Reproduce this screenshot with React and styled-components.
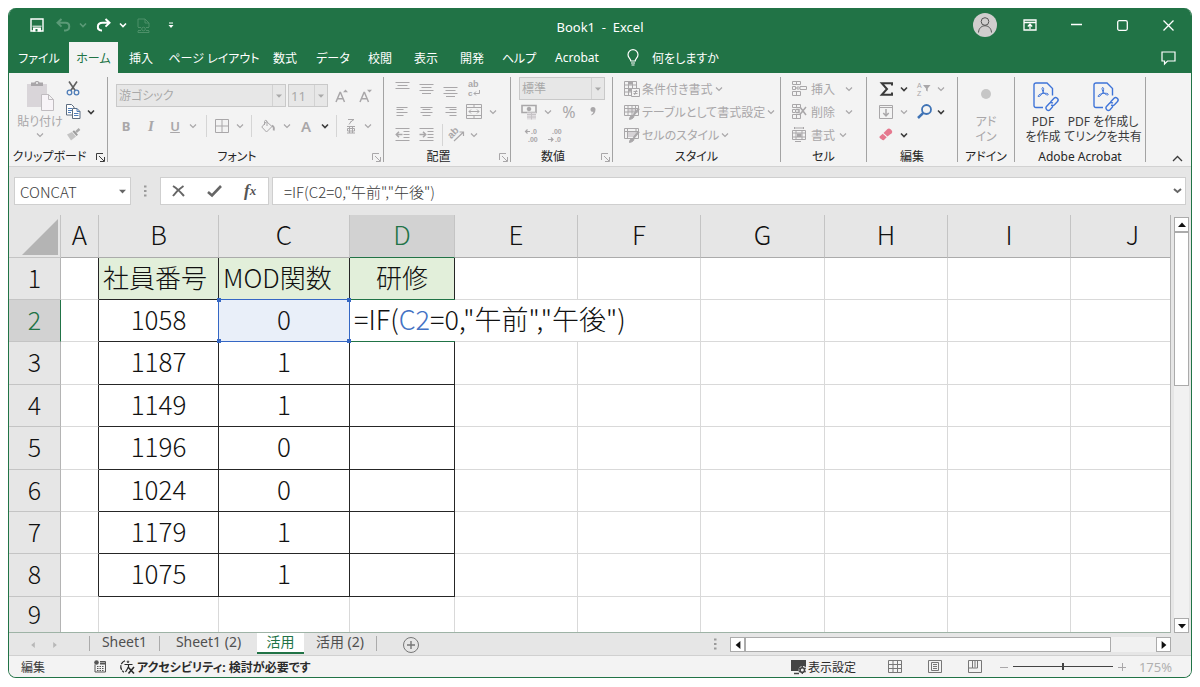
import React from "react";
import styled, { createGlobalStyle, css } from "styled-components";

const GREEN = "#217346";
const DIM = "#a9a7a9";
const INK = "#3b3b3b";
const UI = `"Noto Sans", "Noto Sans CJK JP", sans-serif`;
const SHEET = `"Noto Sans CJK JP", sans-serif`;

const GlobalStyle = createGlobalStyle`
  *, *::before, *::after { box-sizing: border-box; }
  body { margin: 0; background: #fff; font-family: ${UI}; font-size: 12px; color: ${INK}; }
  button, input, select {
    font: inherit; color: inherit; margin: 0; padding: 0;
    border: 0; border-radius: 0; background: none; outline: none;
  }
  svg { display: block; flex: none; overflow: visible; }
`;

/* ---------- window frame ---------- */

const Page = styled.div`
  height: 100vh;
  min-height: 400px;
  padding: 8px 8px 9px;
  display: flex;
`;

const Window = styled.div`
  flex: 1;
  min-width: 0;
  display: flex;
  flex-direction: column;
  border: 1px solid ${GREEN};
  border-top: 0;
  border-radius: 8px;
  overflow: hidden;
  background: #e6e6e6;
  font-feature-settings: "palt";
`;

const Header = styled.header`
  flex: none;
  background: ${GREEN};
  color: #fff;
`;

const TitleBar = styled.div`
  display: grid;
  grid-template-columns: 1fr auto 1fr;
  align-items: center;
  height: 34px;
`;

const QuickAccess = styled.div`
  display: flex;
  align-items: center;
  padding-left: 18px;
`;

const Title = styled.h1`
  margin: 0;
  padding-top: 3px;
  font-size: 13px;
  font-weight: 400;
  white-space: pre;
`;

const WindowButtons = styled.div`
  display: flex;
  align-items: center;
  justify-content: flex-end;
`;

const Avatar = styled.button`
  width: 24px;
  height: 24px;
  margin-right: 10px;
  border-radius: 50%;
  background: #d0cece;
  color: #555;
  display: flex;
  align-items: center;
  justify-content: center;
`;

const IconButton = styled.button`
  flex: none;
  width: ${(p) => p.$w || 24}px;
  height: ${(p) => p.$h || 22}px;
  display: flex;
  align-items: center;
  justify-content: center;
  color: ${(p) => p.$color || DIM};
`;

const TabRow = styled.nav`
  display: flex;
  height: 31px;
`;

const Tab = styled.button`
  flex: none;
  width: ${(p) => p.$w}px;
  font-size: 12px;
  white-space: nowrap;
  ${(p) => p.$active && css`background: #f3f3f3; color: ${GREEN};`}
`;

const TellMe = styled.button`
  display: flex;
  align-items: center;
  gap: 13px;
  padding-left: 19px;
  white-space: nowrap;
`;

const Spacer = styled.div`
  flex: 1;
`;

/* ---------- ribbon ---------- */

const Ribbon = styled.div`
  flex: none;
  display: flex;
  height: 94px;
  padding: 4px 0;
  background: #f3f3f3;
  border-bottom: 1px solid #d2d2d2;
`;

const Group = styled.section`
  position: relative;
  flex: none;
  width: ${(p) => p.$w}px;
  display: flex;
  flex-direction: column;
  border-right: 1px solid #a3a3a3;
`;

const GroupBody = styled.div`
  flex: 1;
  display: flex;
  flex-direction: ${(p) => (p.$column ? "column" : "row")};
  padding: ${(p) => p.$pad || "0"};
`;

const GroupLabel = styled.div`
  display: flex;
  align-items: flex-end;
  justify-content: center;
  height: 16px;
  padding-right: ${(p) => (p.$launcher ? 17 : 0)}px;
  font-size: 12px;
  line-height: 10px;
  color: #262626;
  white-space: nowrap;
`;

const Launcher = styled.button`
  position: absolute;
  right: 2px;
  bottom: 0;
  width: 9px;
  height: 9px;
  color: ${(p) => p.$color || DIM};
`;

const Row = styled.div`
  display: flex;
  align-items: center;
  height: ${(p) => p.$h || 23}px;
`;

const Column = styled.div`
  display: flex;
  flex-direction: column;
`;

const Rule = styled.span`
  flex: none;
  width: 1px;
  height: 22px;
  margin: 0 4px;
  background: #d5d5d5;
`;

const BigButton = styled.button`
  width: ${(p) => p.$w}px;
  display: flex;
  flex-direction: column;
  align-items: center;
  font-size: 12px;
  line-height: 15px;
  color: ${(p) => p.$color || DIM};
  white-space: nowrap;
`;

const BigLabel = styled.span`
  padding: 3px 0;
`;

const TextButton = styled.button`
  display: flex;
  align-items: center;
  gap: ${(p) => p.$gap || 2}px;
  height: 23px;
  color: ${DIM};
  white-space: nowrap;
`;

const Glyph = styled.span`
  font-size: ${(p) => p.$size || 14}px;
  font-weight: ${(p) => p.$weight || 400};
  font-style: ${(p) => (p.$italic ? "italic" : "normal")};
  font-family: ${(p) => (p.$serif ? '"Liberation Serif", serif' : UI)};
  text-decoration: ${(p) => (p.$underline ? "underline" : "none")};
  line-height: 16px;
`;

const SelectBox = styled.span`
  display: flex;
  position: relative;
  width: ${(p) => p.$w}px;
  height: 23px;
  margin-right: 2px;
  border: 1px solid #c9c9c9;
  background: #e7e7e7;
  color: #a9a9a9;
`;

const Select = styled.select`
  appearance: none;
  flex: 1;
  min-width: 0;
  padding: 0 2px;
  font-size: ${(p) => p.$size || 12}px;
  opacity: 1;
`;

const SelectArrow = styled.span`
  width: 13px;
  border-left: 1px solid #d2d2d2;
  display: flex;
  align-items: center;
  justify-content: center;
  pointer-events: none;
`;

const RibbonEnd = styled.div`
  flex: 1;
  display: flex;
  align-items: flex-end;
  justify-content: flex-end;
  padding-right: 2px;
`;

/* ---------- formula bar ---------- */

const FormulaRow = styled.div`
  flex: none;
  display: flex;
  height: 48px;
  padding: 10px 5px;
`;

const FieldBox = styled.div`
  display: flex;
  align-items: center;
  flex: ${(p) => (p.$w ? "none" : "1")};
  width: ${(p) => (p.$w ? p.$w + "px" : "auto")};
  min-width: 0;
  background: #fff;
  border: 1px solid #cfcfcf;
`;

const Field = styled.input`
  flex: 1;
  min-width: 0;
  height: 24px;
  padding-left: ${(p) => p.$pad}px;
  font-family: ${SHEET};
  font-size: 15px;
  font-weight: 300;
  font-feature-settings: normal;
  color: #3a3a3a;
`;

const DotsHandle = styled.span`
  width: 29px;
  display: flex;
  align-items: center;
  justify-content: center;
  color: #9a9a9a;
`;

const FxBox = styled(FieldBox)`
  justify-content: space-around;
  margin-right: 3px;
`;

/* ---------- worksheet ---------- */

const SheetArea = styled.div`
  flex: 1;
  min-height: 0;
  display: flex;
`;

const GridClip = styled.div`
  flex: 1;
  min-width: 0;
  overflow: hidden;
  background: #fff;
  border-right: 1px solid #b4b4b4;
  border-bottom: 1px solid #9eb3a6;
`;

const Grid = styled.table`
  table-layout: fixed;
  width: 1186px;
  border-collapse: separate;
  border-spacing: 0;
  font-family: ${SHEET};
  font-size: 26px;
  font-weight: 300;
  font-feature-settings: normal;
  line-height: 30px;
  color: #111;
`;

const Col = styled.col`
  width: ${(p) => p.$w}px;
`;

const Line = styled.tr`
  height: ${(p) => p.$h}px;
`;

const HeadCell = styled.th`
  position: relative;
  padding: 0 0 4px;
  font-weight: 300;
  font-size: ${(p) => (p.$row ? 25 : 26)}px;
  background: ${(p) => (p.$on ? "#d2d2d2" : "#e6e6e6")};
  color: ${(p) => (p.$on ? GREEN : "#111")};
  border-right: 1px solid ${(p) => (p.$row ? (p.$on ? GREEN : "#b4b4b4") : "#c4c4c4")};
  border-bottom: 1px solid ${(p) => (p.$row ? "#c4c4c4" : p.$on ? GREEN : "#ababab")};
`;

const Corner = styled.td`
  padding: 0;
  background: #e6e6e6;
  border-right: 1px solid #c4c4c4;
  border-bottom: 1px solid #c4c4c4;
`;

const SelectAll = styled.button`
  display: flex;
  width: 100%;
  height: 42px;
  align-items: flex-end;
  justify-content: flex-end;
  padding: 2px;
`;

const Cell = styled.td`
  position: relative;
  padding: 0 4px 4px;
  text-align: ${(p) => p.$align || "center"};
  white-space: nowrap;
  background: ${(p) => p.$fill || "#fff"};
  border-right: 1px solid ${(p) => (p.$edgeRight ? "#262626" : "#d9d9d9")};
  border-bottom: 1px solid ${(p) => (p.$edgeBottom ? "#262626" : "#d9d9d9")};
`;

const Outline = styled.span`
  position: absolute;
  inset: -1px;
  border: 1px solid ${(p) => p.$color};
  z-index: ${(p) => p.$z};
  pointer-events: none;
`;

const Knob = styled.span`
  position: absolute;
  width: 4px;
  height: 4px;
  background: ${(p) => p.$color};
  ${(p) => p.$at.includes("t") ? "top: -2px;" : "bottom: -2px;"}
  ${(p) => p.$at.includes("l") ? "left: -2px;" : "right: -2px;"}
`;

const CellEditor = styled.span`
  position: absolute;
  top: 0;
  left: 0;
  bottom: 0;
  z-index: 1;
  display: flex;
  align-items: center;
  padding: 0 4px 4px;
  font-size: 27px;
  background: #fff;
`;

const RefText = styled.span`
  color: #4472c4;
`;

const VScroll = styled.div`
  flex: none;
  width: 20px;
  padding: 2px 2px 0 3px;
  display: flex;
  flex-direction: column;
`;

const ScrollButton = styled.button`
  flex: none;
  width: 15px;
  height: 15px;
  display: flex;
  align-items: center;
  justify-content: center;
  background: #fff;
  border: 1px solid #ababab;
  color: #111;
`;

const Track = styled.div`
  flex: 1;
  display: flex;
  flex-direction: ${(p) => (p.$vertical ? "column" : "row")};
  background: #f1f1f1;
`;

const Thumb = styled.div`
  background: #fff;
  border: 1px solid #ababab;
  ${(p) => (p.$vertical ? "height: 40%;" : "width: 89%;")}
`;

/* ---------- sheet tabs and status bar ---------- */

const SheetBar = styled.div`
  flex: none;
  display: flex;
  height: 22px;
`;

const SheetNav = styled.div`
  width: 80px;
  display: flex;
  align-items: center;
  padding: 2px 0 0 13px;
`;

const SheetTab = styled.button`
  flex: none;
  width: ${(p) => p.$w}px;
  height: 21px;
  line-height: 18px;
  padding-bottom: 3px;
  font-size: 14px;
  white-space: nowrap;
  color: #505050;
  ${(p) => p.$active && css`
    background: #fff;
    color: ${GREEN};
    border-bottom: 2px solid ${GREEN};
    padding-bottom: 1px;
  `}
`;

const TabRule = styled.span`
  width: 1px;
  height: 15px;
  margin-top: 3px;
  background: #ababab;
`;

const HScroll = styled.div`
  width: 441px;
  margin: 4px 20px 3px 0;
  display: flex;
`;

const StatusBar = styled.footer`
  flex: none;
  display: flex;
  align-items: center;
  height: 22px;
  padding: 0 19px 0 12px;
  background: #f3f3f3;
  border-top: 1px solid #d0d0d0;
  white-space: nowrap;
`;

const StatusText = styled.span`
  width: 72px;
`;

const StatusButton = styled.button`
  display: flex;
  align-items: center;
  gap: 2px;
  margin: ${(p) => p.$margin || 0};
  font-weight: ${(p) => (p.$bold ? 700 : 400)};
  color: #2b2b2b;
`;

const ZoomRange = styled.input`
  appearance: none;
  width: 100px;
  height: 16px;
  background: linear-gradient(#444, #444) center / 100% 1px no-repeat;
  &::-webkit-slider-thumb {
    appearance: none;
    width: 2px;
    height: 7px;
    background: #444;
  }
`;

const ZoomValue = styled.span`
  width: 41px;
  text-align: right;
  font-size: 13px;
  color: #b0b0b0;
`;

/* ---------- icons ---------- */

const Svg = ({ w = 16, h = w, sw = 1, children, ...rest }) => (
  <svg width={w} height={h} viewBox={`0 0 ${w} ${h}`} fill="none" stroke="currentColor" strokeWidth={sw} aria-hidden="true" {...rest}>
    {children}
  </svg>
);

const Chevron = ({ sw = 1.2 }) => (
  <Svg w={8} h={6} sw={sw}><path d="M1 1.500 4 4.500l3-3" /></Svg>
);

const Triangle = ({ dir = "down", size = 6 }) => {
  const d = { down: "M0 1.5h6L3 4.8z", up: "M0 4.5h6L3 1.2z", left: "M4.8 0v6L1.2 3z", right: "M1.2 0v6l3.6-3z" }[dir];
  return <svg width={size} height={size} viewBox="0 0 6 6" aria-hidden="true"><path d={d} fill="currentColor" /></svg>;
};

const SaveIcon = () => (
  <Svg w={14} h={14} sw={1.4}>
    <path d="M1 1h12v12H1z" />
    <path d="M2.500 8.200h9" strokeWidth="1" />
    <path d="M3 9.500h8V13.500H3z" fill="currentColor" stroke="none" />
    <path d="M5.500 11h2v2.500h-2z" fill={GREEN} stroke="none" />
  </Svg>
);
const UndoIcon = () => (
  <Svg w={15} h={14} sw={2}><path d="M5.500 1 1.500 4.800l4 3.800M2 4.800h7.500c5 0 5 7.200 0 7.700H8" /></Svg>
);
const RedoIcon = () => (
  <Svg w={15} h={14} sw={2}><path d="M9.500 1l4 3.800-4 3.800M13 4.800H6.500C.5 4.800.5 12 5.500 12.500H6" /></Svg>
);
const DocIcon = () => (
  <Svg w={13} h={15}><path d="M1 9V1h7l4 4v4M8 1v4h4M1 13v1.500h11V13" /><path d="M1 9.500h3M9 9.500h3M1 12.500h3M9 12.500h3" /><circle cx="6.500" cy="11" r="1.800" /></Svg>
);
const MoreIcon = () => (
  <Svg w={6} h={7}><path d="M1 1h4" /><path d="M.5 3h5L3 6z" fill="currentColor" stroke="none" /></Svg>
);
const PersonIcon = () => (
  <Svg w={16} h={16}><circle cx="8" cy="4.500" r="3.800" /><path d="M1.500 15.500c.5-9 12.500-9 13 0" /></Svg>
);
const RibbonModeIcon = () => (
  <Svg w={14} h={12} sw={1.300}><path d="M1 1h12v10H1zM1 3.500h12M7 10V5.500M4.800 7.500 7 5.200l2.200 2.300" /></Svg>
);
const CommentIcon = () => (
  <Svg w={15} h={14} sw={1.200}><path d="M1 1h13v9H6.500L3.500 13v-3H1z" /></Svg>
);
const BulbIcon = () => (
  <Svg w={12} h={17} sw={1.200}><path d="M3.800 12c0-2.500-2.800-3-2.800-6.300a5 5 0 0 1 10 0C11 9 8.200 9.500 8.200 12zM4 14h4M4.500 16h3" /></Svg>
);
const PasteIcon = () => (
  <Svg w={28} h={31}>
    <path d="M1 4h20v23H1z" fill="#d9d5d9" stroke="none" />
    <path d="M5 2.500h3.500C9 .5 13 .5 13.500 2.500H17V6H5z" fill="#a9a6a9" stroke="none" />
    <circle cx="11" cy="3" r="1" fill="#f3f3f3" stroke="none" />
    <path d="M15.500 14.500h7l5 5v11h-12zM22.500 14.500v5h5" fill="#f8f4f8" stroke="#c0bcc0" />
  </Svg>
);
const CutIcon = () => (
  <Svg w={14} h={15} sw={1.600}>
    <path d="M3 0.500l6.500 9.500M11 .5 4.500 10" stroke="#606060" />
    <circle cx="3.500" cy="11.500" r="2.300" stroke="#4f7db8" strokeWidth="1.300" />
    <circle cx="10.500" cy="11.500" r="2.300" stroke="#4f7db8" strokeWidth="1.300" />
  </Svg>
);
const CopyIcon = () => (
  <Svg w={15} h={15} stroke="#5d6d80">
    <path d="M.5.5h5l2.500 2.500v8H.5z" fill="#fff" /><path d="M2 4.500h4M2 6.500h4M2 8.500h3" stroke="#4f7db8" />
    <path d="M6.500 4.500h4.500l3 3v7H6.500z" fill="#fff" /><path d="M11 4.500v3h3M8 9.500h4.500M8 11.500h4.500" stroke="#4f7db8" />
  </Svg>
);
const BrushIcon = () => (
  <Svg w={15} h={13}>
    <path d="M1 6.500l5-2.500 4 4.500-5 4z" fill="#c4c4c4" stroke="none" />
    <path d="M6.500 3.500 8 2.300l4 4.500-1.500 1.200z" fill="#9b9b9b" stroke="none" />
    <path d="M10 4.200 13.500 1" strokeWidth="2.500" stroke="#a9a9a9" />
  </Svg>
);
const LauncherIcon = () => (
  <Svg w={9} h={9}><path d="M.5 7V.5H7M3 3l5 5M8.500 4v4.500H4" /></Svg>
);
const BordersIcon = () => <Svg w={14} h={14}><path d="M.5.5h13v13H.5zM7 .5v13M.5 7h13" /></Svg>;
const FillIcon = () => (
  <Svg w={14} h={13}><path d="M5.500 1.500 11 6.500 5.500 12 .8 7zM3.500 5V1.500c0-1.500 2.500-1.500 2.500 0V6" /><path d="M11 5.500c2 1 2.200 3 1.700 5" strokeWidth="1.800" /></Svg>
);
const SizeIcon = ({ up }) => (
  <Svg w={14} h={14}>
    <path d="M1 13 5 3.500h.5L9.500 13M2.500 9.800h5.500" strokeWidth="1.500" />
    <path d={up ? "M8 3.200 10.500.5 13 3.200z" : "M8 .8h5l-2.500 2.700z"} fill="currentColor" stroke="none" />
  </Svg>
);
const PhoneticIcon = () => (
  <Svg w={10} h={16}><path d="M2 1.500h6L4.500 4M5.500 3 3 6.500M1 8.500h8M1 15h8M3.500 8.500V15M6.500 8.500V15M1.500 10.500h7v2.500h-7z" /></Svg>
);
const CommaIcon = () => (
  <Svg w={6} h={9}><path d="M0.500 2.500a2.300 2.300 0 0 1 5 0C5.500 5.500 4 7.500 1.500 8.500V7.300C2.700 6.700 3.200 6 3.300 4.800 1.500 5 .5 4 .5 2.500z" fill="currentColor" stroke="none" /></Svg>
);

const LINES = {
  top: "M.5 1.500h14M2.500 4.500h10M.5 7.500h14",
  middle: "M.5 3.500h14M2.500 6.500h10M.5 9.500h14M3 12.500h9",
  bottom: "M.5 6.500h14M2.500 9.500h10M.5 12.500h14M3 15.500h9",
  left: "M1.500 3.500h11M1.500 5.500h7M1.500 8.500h11M1.500 11.500h7",
  center: "M1.500 3.500h12M3.500 5.500h8M1.500 8.500h12M3.500 11.500h8",
  right: "M2.500 3.500h11M6.500 5.500h7M2.500 8.500h11M6.500 11.500h7",
};
const AlignIcon = ({ kind }) => <Svg w={15} h={15}><path d={LINES[kind]} /></Svg>;
const IndentIcon = ({ out }) => (
  <Svg w={15} h={13}>
    <path d="M.5.5h14M8.500 3.500h6M8.500 6.500h6M.5 12.500h14M8.500 9.500h6" />
    <path d={out ? "M7.500 6.500H1.500M4 3.800 1.300 6.500 4 9.200" : "M.5 6.500h6M4 3.800l2.700 2.700L4 9.200"} strokeWidth="1.500" />
  </Svg>
);
const MergeIcon = () => (
  <Svg w={16} h={15}><path d="M.5.5h15v14H.5zM.5 3.500h15M.5 11.500h15M8 .5v3M8 11.500v3M3 7.500h10M5 5.500l-2 2 2 2M11 5.500l2 2-2 2" /></Svg>
);
const IconText = styled.text`
  font-family: "Liberation Sans", sans-serif;
  font-size: ${(p) => p.$size}px;
  font-weight: ${(p) => p.$weight || 700};
  fill: currentColor;
  stroke: none;
`;
const WrapIcon = () => (
  <Svg w={14} h={17}>
    <IconText x="1" y="7" $size={9}>ab</IconText>
    <IconText x="1" y="16" $size={8}>c</IconText>
    <path d="M12.500 10v3.500H7M9 11.500l-2 2 2 2" />
  </Svg>
);
const OrientIcon = () => (
  <Svg w={16} h={15}>
    <IconText x="0" y="9" $size={10} transform="rotate(-45 5 8)">ab</IconText>
    <path d="M5 14 14 5.500M10.500 5h4v4" strokeWidth="1.200" />
  </Svg>
);
const MoneyIcon = () => (
  <Svg w={16} h={16}>
    <path d="M1 1.500h14v7H1z" strokeWidth="1.600" /><circle cx="8" cy="5" r="1.800" fill="currentColor" />
    <path d="M6 8.500h9v7H6z" fill="#e0dde0" stroke="none" /><path d="M6 10.500h9M6 13h9M10.500 8.500v7" stroke="#c6c3c6" />
  </Svg>
);
const DecimalIcon = ({ more }) => (
  <Svg w={14} h={14}>
    <IconText x={more ? 7 : 4} y="6" $size={7}>{more ? ".0" : ".00"}</IconText>
    <IconText x={more ? 4 : 7} y="14" $size={7}>{more ? ".00" : ".0"}</IconText>
    <path d={more ? "M6 3.500H1.500M3.500 1.500l-2 2 2 2" : "M0 11.500h5M3 9.500l2 2-2 2"} strokeWidth="1.200" />
  </Svg>
);
const CondIcon = () => (
  <Svg w={16} h={16}>
    <path d="M.5.5h12v14H.5zM.5 4h12M.5 7.500h12M.5 11h12M4.500.5v14M8.500.5v14" />
    <path d="M5 1h3v2.500H5zM5 8h2v2.500H5z" fill="currentColor" stroke="none" />
    <path d="M7.500 7.500h8v8h-8z" fill="#f3f3f3" /><path d="M9.500 10.500h4M9.500 12.500h4M12.500 9l-2 5" />
  </Svg>
);
const TableStyleIcon = ({ plain }) => (
  <Svg w={16} h={16}>
    <path d={plain ? "M4 5h7v5H4z" : "M4 5h7v3H4z"} fill="#d6d3d6" stroke="none" />
    <path d={plain ? "M.5 1.500h14v10H.5zM.5 4.500h14M3.500 1.500v10M12 1.500V8" : "M.5 1.500h14v10H.5zM.5 4.500h14M.5 8h14M4 1.500v10M8 1.500v10M11.500 1.500V9"} />
    <path d="M15 4.500 9.500 11" strokeWidth="2" /><path d="M5.500 15.500c0-3 2-4.500 3.500-4s1.500 3-3.500 4z" fill="currentColor" />
  </Svg>
);
const CellsIcon = ({ kind }) => (
  <Svg w={15} h={15}>
    {kind === "format" ? (
      <><path d="M.5 3.500h13v9H.5zM.5 6h13M.5 10h13M4 3.500v9M10 3.500v9M2.500 0v2M11.500 0v2M2.500 1h9M3 14.500h6" /><path d="M5 6.500h4.500v3.500H5z" fill="currentColor" stroke="none" /></>
    ) : (
      <><path d="M.5.5h8v3h-8zM.5 10.500h8v4h-8zM4.500.5v3M4.500 10.500v4M.5 5.500h3v3h-3z" />
        {kind === "insert" ? <path d="M14.500 5.500v3H8v-3zM8 7H4.500M6.500 5l-2 2 2 2" /> : <path d="M4 5.500h3v3H4M8 3l6 8M14 3l-6.500 8" strokeWidth="1.500" />}</>
    )}
  </Svg>
);
const SigmaIcon = () => <Svg w={13} h={14} sw={2}><path d="M12 3.500V1.200H1.800L7 7l-5.200 5.800H12v-2.300" /></Svg>;
const DownBoxIcon = () => <Svg w={14} h={14}><path d="M.5.5h13v13H.5zM.5 2.500h13" /><path d="M7 4v7M4.300 8 7 11l2.700-3" strokeWidth="1.500" /></Svg>;
const EraserIcon = () => (
  <Svg w={14} h={13}><path d="M8.500 1c1-1 2.200-.6 3.600.8 1.400 1.400 1.400 2.600.5 3.400L8.500 8.500 4.500 5z" fill="#e5788e" stroke="none" /><path d="M3.700 5.700 7.700 9.300 5 12c-1 1-3.600-1.500-3.600-1.500S-.2 9.200.6 8.400z" fill="#e5788e" stroke="none" /></Svg>
);
const SortIcon = () => (
  <Svg w={14} h={14}>
    <IconText x="0" y="6" $size={7} $weight={400}>A</IconText>
    <IconText x="0" y="14" $size={7} $weight={400}>Z</IconText>
    <path d="M6 3h7.500L10.700 6.500V9.500L9 8.500V6.500z" fill="currentColor" stroke="none" />
  </Svg>
);
const FindIcon = () => <Svg w={15} h={15} sw={1.800}><circle cx="9.500" cy="5.500" r="4.500" /><path d="M6.300 8.800 1 14" strokeWidth="2.500" /></Svg>;

const BlueInk = styled.span`
  padding-left: 6px;
  color: #3f74d8;
`;
const PdfIcon = () => (
  <BlueInk>
    <Svg w={26} h={29} sw={1.400}>
      <path d="M10 25.500H3a2 2 0 0 1-2-2V3a2 2 0 0 1 2-2h11l5.500 5.500v7" />
      <path d="M9.500 5.500c1.500-.3 1.500 2.500.2 5.200S6 15 5.200 14.500c-.8-1 2.300-2.800 4.800-3.100s5.300-.2 5.300 1-2.800.4-4.300-1.400S8.300 6 9.500 5.500z" strokeWidth="1" />
      <path d="M17.500 20l3.500-3.800c2-2 5.500 1 3.500 3.300l-3 3.200c-1 1-2.500.9-3.300.2M19.800 21.200c-1-1-2.500-.8-3.300.1l-3 3.200c-2 2.200 1.500 5.200 3.500 3.200l3-3.300" />
    </Svg>
  </BlueInk>
);
const CancelIcon = () => <Svg w={13} h={12} sw={2}><path d="M1 1c4 2.500 7.500 6 11 10M11.500 1C7.500 3.500 4 7 1 11" /></Svg>;
const AcceptIcon = () => <Svg w={15} h={12} sw={2.600}><path d="M1 7l4 3.500L14 1" /></Svg>;
const DotsIcon = () => <Svg w={3} h={14}><path d="M0 2.500h2.500M0 7h2.500M0 11.500h2.500" strokeWidth="2" /></Svg>;
const AddIcon = () => <Svg w={16} h={16}><circle cx="8" cy="8" r="7.500" /><path d="M8 4v8M4 8h8" strokeWidth="1.400" /></Svg>;
const MacroIcon = () => (
  <Svg w={12} h={13}><path d="M1 4.500V12h10.500V1.500H6" /><path d="M6 3.500h5" strokeWidth="2" /><path d="M3 6.500h7M3 8.500h7M3 10.500h7" strokeDasharray="1.500 1" /><circle cx="2.500" cy="2.500" r="2.300" fill="currentColor" stroke="none" /></Svg>
);
const AccessIcon = () => (
  <Svg w={15} h={14}><path d="M5 .8C-.5 3-.5 9.500 4 12.300" strokeWidth="1.200" strokeDasharray="5 1" /><circle cx="8" cy="1.800" r=".8" /><path d="M4.500 4.500h8M8.500 4.500V7L5.500 12" strokeWidth="1.200" /><path d="M8 7l6 6.500M14 7l-5.500 6.500" strokeWidth="1.600" /></Svg>
);
const DisplayIcon = () => (
  <Svg w={15} h={14}><path d="M0 0h15v7l-3-1-4 3v2H0z" fill="#444" stroke="none" /><path d="M3 13.500h5" stroke="#444" strokeWidth="1.500" /><circle cx="11.300" cy="10" r="3.700" fill="#f3f3f3" stroke="none" /><circle cx="11.300" cy="10" r="2.300" stroke="#444" strokeWidth="1.600" /><path d="M11.300 6v2M11.300 12v2M7.800 8l2 1M12.800 11l2 1M14.800 8l-2 1M9.800 11l-2 1" stroke="#444" strokeWidth="1.300" /></Svg>
);
const ViewIcon = ({ kind }) => (
  <Svg w={14} h={13}>
    {kind === "normal" && <path d="M.5.5h13v12H.5zM.5 4.500h13M.5 8.500h13M5 .5v12M9.500 .5v12" />}
    {kind === "layout" && <path d="M.5.5h13v12H.5zM3.500 2.500h7v8h-7zM5 4.500h4M5 6.500h4M5 8.500h4" />}
    {kind === "break" && <path d="M.5.5h13v12H.5zM4.500.5v7.500h5V.5M.5 8h4M7 .5v7" />}
  </Svg>
);

/* ---------- data ---------- */

const TABS = [
  ["ファイル", 60], ["ホーム", 49], ["挿入", 46], ["ページ レイアウト", 100], ["数式", 42], ["データ", 54],
  ["校閲", 40], ["表示", 52], ["開発", 40], ["ヘルプ", 54], ["Acrobat", 62],
];

const COLUMNS = [
  ["A", 38], ["B", 120], ["C", 131], ["D", 105], ["E", 123], ["F", 123], ["G", 124], ["H", 123], ["I", 123], ["J", 124],
];

const ROWS = [
  { h: 42, B: "社員番号", C: "MOD関数", D: "研修" },
  { h: 42, B: "1058", C: "0" },
  { h: 43, B: "1187", C: "1" },
  { h: 42, B: "1149", C: "1" },
  { h: 43, B: "1196", C: "0" },
  { h: 42, B: "1024", C: "0" },
  { h: 42, B: "1179", C: "1" },
  { h: 43, B: "1075", C: "1" },
  { h: 36 },
];

function SheetCell({ col, row, value }) {
  const inTable = row < 8;
  const boxed = inTable && "BCD".includes(col);
  const isRef = col === "C" && row === 1;
  const isEdit = col === "D" && row === 1;
  let fill;
  if (boxed && row === 0) fill = "#e2efda";
  if (isRef) fill = "#e9eff9";
  return (
    <Cell
      $edgeRight={inTable && "ABCD".includes(col)}
      $edgeBottom={boxed}
      $fill={fill}
      $align={row === 0 && col !== "D" ? "left" : "center"}
    >
      {value}
      {isRef && (
        <Outline $color="#3567c4" $z={3}>
          {["tl", "tr", "bl", "br"].map((at) => <Knob key={at} $at={at} $color="#3567c4" />)}
        </Outline>
      )}
      {isEdit && (
        <>
          <Outline $color={GREEN} $z={0}><Knob $at="br" $color={GREEN} /></Outline>
          <CellEditor>
            <span>=IF(<RefText>C2</RefText>=0,"午前","午後")</span>
          </CellEditor>
        </>
      )}
    </Cell>
  );
}

const Drop = ({ w = 14, color, label }) => (
  <IconButton $w={w} $color={color} aria-label={label}><Chevron sw={color ? 1.6 : 1.2} /></IconButton>
);

function RibbonBar() {
  return (
    <Ribbon>
      <Group $w={99}>
        <GroupBody $pad="0 0 0 8px">
          <BigButton $w={46} aria-label="貼り付け">
            <Svg w={1} h={3} />
            <PasteIcon />
            <BigLabel>貼り付け</BigLabel>
            <Chevron />
          </BigButton>
          <Column>
            <Row><IconButton $w={20} aria-label="切り取り"><CutIcon /></IconButton></Row>
            <Row><IconButton $w={20} aria-label="コピー"><CopyIcon /></IconButton><Drop w={16} color={INK} label="コピーのオプション" /></Row>
            <Row><IconButton $w={20} aria-label="書式のコピー"><BrushIcon /></IconButton></Row>
          </Column>
        </GroupBody>
        <GroupLabel $launcher>クリップボード</GroupLabel>
        <Launcher $color={INK} aria-label="クリップボードの詳細"><LauncherIcon /></Launcher>
      </Group>

      <Group $w={276}>
        <GroupBody $column $pad="7px 0 0 8px">
          <Row>
            <SelectBox $w={170}>
              <Select aria-label="フォント"><option>游ゴシック</option></Select>
              <SelectArrow><Triangle /></SelectArrow>
            </SelectBox>
            <SelectBox $w={40}>
              <Select aria-label="フォント サイズ" $size={13}><option>11</option></Select>
              <SelectArrow><Triangle /></SelectArrow>
            </SelectBox>
            <IconButton aria-label="拡大"><SizeIcon up /></IconButton>
            <IconButton aria-label="縮小"><SizeIcon /></IconButton>
          </Row>
          <Row $h={38}>
            <IconButton $w={20} aria-label="太字"><Glyph $weight={700} $size={13}>B</Glyph></IconButton>
            <IconButton $w={30} aria-label="斜体"><Glyph $weight={700} $size={15} $serif $italic>I</Glyph></IconButton>
            <IconButton $w={18} aria-label="下線"><Glyph $weight={600} $size={13} $underline>U</Glyph></IconButton>
            <Drop w={18} label="下線の種類" />
            <Rule />
            <IconButton $w={22} aria-label="罫線"><BordersIcon /></IconButton>
            <Drop label="罫線の種類" />
            <Rule />
            <IconButton aria-label="塗りつぶし"><FillIcon /></IconButton>
            <Drop label="塗りつぶしの色" />
            <IconButton aria-label="フォントの色"><Glyph $weight={600} $size={15}>A</Glyph></IconButton>
            <Drop color={INK} label="フォントの色の選択" />
            <Rule />
            <IconButton $w={20} aria-label="ふりがな"><PhoneticIcon /></IconButton>
            <Drop label="ふりがなの設定" />
          </Row>
        </GroupBody>
        <GroupLabel $launcher>フォント</GroupLabel>
        <Launcher aria-label="フォントの詳細"><LauncherIcon /></Launcher>
      </Group>

      <Group $w={127}>
        <GroupBody $column $pad="0 0 0 6px">
          <Row>
            <IconButton aria-label="上揃え"><AlignIcon kind="top" /></IconButton>
            <IconButton aria-label="上下中央揃え"><AlignIcon kind="middle" /></IconButton>
            <IconButton aria-label="下揃え"><AlignIcon kind="bottom" /></IconButton>
            <IconButton aria-label="折り返し"><WrapIcon /></IconButton>
          </Row>
          <Row>
            <IconButton aria-label="左揃え"><AlignIcon kind="left" /></IconButton>
            <IconButton aria-label="中央揃え"><AlignIcon kind="center" /></IconButton>
            <IconButton aria-label="右揃え"><AlignIcon kind="right" /></IconButton>
            <IconButton aria-label="セルの結合"><MergeIcon /></IconButton>
            <Drop label="結合のオプション" />
          </Row>
          <Row>
            <IconButton aria-label="インデント解除"><IndentIcon out /></IconButton>
            <IconButton aria-label="インデント"><IndentIcon /></IconButton>
            <Rule />
            <IconButton $w={20} aria-label="方向"><OrientIcon /></IconButton>
            <Drop label="方向のオプション" />
          </Row>
        </GroupBody>
        <GroupLabel $launcher>配置</GroupLabel>
        <Launcher aria-label="配置の詳細"><LauncherIcon /></Launcher>
      </Group>

      <Group $w={102}>
        <GroupBody $column $pad="0 0 0 8px">
          <Row>
            <SelectBox $w={86}>
              <Select aria-label="表示形式"><option>標準</option></Select>
              <SelectArrow><Triangle /></SelectArrow>
            </SelectBox>
          </Row>
          <Row>
            <IconButton $w={20} aria-label="通貨"><MoneyIcon /></IconButton>
            <Drop w={18} label="通貨の種類" />
            <IconButton aria-label="パーセント"><Glyph $size={16}>%</Glyph></IconButton>
            <IconButton aria-label="桁区切り"><CommaIcon /></IconButton>
          </Row>
          <Row>
            <IconButton aria-label="小数点以下を増やす"><DecimalIcon more /></IconButton>
            <IconButton aria-label="小数点以下を減らす"><DecimalIcon /></IconButton>
          </Row>
        </GroupBody>
        <GroupLabel $launcher>数値</GroupLabel>
        <Launcher aria-label="数値の詳細"><LauncherIcon /></Launcher>
      </Group>

      <Group $w={168}>
        <GroupBody $column $pad="0 0 0 11px">
          <TextButton><CondIcon />条件付き書式<Chevron /></TextButton>
          <TextButton><TableStyleIcon />テーブルとして書式設定<Chevron /></TextButton>
          <TextButton><TableStyleIcon plain />セルのスタイル<Chevron /></TextButton>
        </GroupBody>
        <GroupLabel>スタイル</GroupLabel>
      </Group>

      <Group $w={86}>
        <GroupBody $column $pad="0 0 0 11px">
          <Row><TextButton $gap={4}><CellsIcon kind="insert" />挿入</TextButton><Drop w={28} label="挿入のオプション" /></Row>
          <Row><TextButton $gap={4}><CellsIcon kind="delete" />削除</TextButton><Drop w={28} label="削除のオプション" /></Row>
          <TextButton $gap={4}><CellsIcon kind="format" />書式<Chevron /></TextButton>
        </GroupBody>
        <GroupLabel>セル</GroupLabel>
      </Group>

      <Group $w={91}>
        <GroupBody $column $pad="0 0 0 7px">
          <Row>
            <IconButton $color={INK} aria-label="合計"><SigmaIcon /></IconButton>
            <Drop w={12} color={INK} label="合計のオプション" />
            <IconButton $w={28} aria-label="並べ替え"><SortIcon /></IconButton>
            <Drop w={6} label="並べ替えのオプション" />
          </Row>
          <Row>
            <IconButton aria-label="フィル"><DownBoxIcon /></IconButton>
            <Drop w={12} label="フィルのオプション" />
            <IconButton $w={28} $color="#3f73b5" aria-label="検索"><FindIcon /></IconButton>
            <Drop w={6} color={INK} label="検索のオプション" />
          </Row>
          <Row>
            <IconButton aria-label="クリア"><EraserIcon /></IconButton>
            <Drop w={12} color={INK} label="クリアのオプション" />
          </Row>
        </GroupBody>
        <GroupLabel>編集</GroupLabel>
      </Group>

      <Group $w={57}>
        <GroupBody>
          <BigButton $w={56}>
            <Svg w={12} h={34}><circle cx="6" cy="17" r="5" fill="#c6c6c6" stroke="none" /></Svg>
            <BigLabel>アド<br />イン</BigLabel>
          </BigButton>
        </GroupBody>
        <GroupLabel>アドイン</GroupLabel>
      </Group>

      <Group $w={131}>
        <GroupBody>
          <BigButton $w={56} $color={INK}>
            <Svg w={1} h={5} />
            <PdfIcon />
            <BigLabel>PDF<br />を作成</BigLabel>
          </BigButton>
          <BigButton $w={64} $color={INK}>
            <Svg w={1} h={5} />
            <PdfIcon />
            <BigLabel>PDF を作成し<br />てリンクを共有</BigLabel>
          </BigButton>
        </GroupBody>
        <GroupLabel>Adobe Acrobat</GroupLabel>
      </Group>

      <RibbonEnd>
        <IconButton $h={8} $color={INK} aria-label="リボンを折りたたむ">
          <Svg w={11} h={7} sw={1.300}><path d="M1 6l4.500-4.500L10 6" /></Svg>
        </IconButton>
      </RibbonEnd>
    </Ribbon>
  );
}

export default function App() {
  return (
    <Page>
      <GlobalStyle />
      <Window>
        <Header>
          <TitleBar>
            <QuickAccess>
              <IconButton $w={20} $color="#fff" aria-label="上書き保存"><SaveIcon /></IconButton>
              <IconButton $w={32} $color="#5b9a77" aria-label="元に戻す"><UndoIcon /></IconButton>
              <Drop w={8} color="#5b9a77" label="元に戻す操作" />
              <IconButton $w={32} $color="#fff" aria-label="やり直し"><RedoIcon /></IconButton>
              <Drop w={8} color="#fff" label="やり直す操作" />
              <IconButton $w={32} $color="#4d9069" aria-label="PDF"><DocIcon /></IconButton>
              <IconButton aria-label="カスタマイズ" $color="#fff"><MoreIcon /></IconButton>
            </QuickAccess>
            <Title>{"Book1  -  Excel"}</Title>
            <WindowButtons>
              <Avatar aria-label="アカウント"><PersonIcon /></Avatar>
              <IconButton $w={46} $color="#fff" aria-label="リボンの表示"><RibbonModeIcon /></IconButton>
              <IconButton $w={46} $color="#fff" aria-label="最小化"><Svg w={11} h={11} sw={1.300}><path d="M0 4.500h11" /></Svg></IconButton>
              <IconButton $w={46} $color="#fff" aria-label="最大化"><Svg w={11} h={11} sw={1.300}><rect x=".7" y=".7" width="9.600" height="9.600" rx="1.500" /></Svg></IconButton>
              <IconButton $w={46} $color="#fff" aria-label="閉じる"><Svg w={11} h={11} sw={1.300}><path d="M.5.5l10 10M10.500.5l-10 10" /></Svg></IconButton>
            </WindowButtons>
          </TitleBar>
          <TabRow>
            {TABS.map(([name, w]) => <Tab key={name} $w={w} $active={name === "ホーム"}>{name}</Tab>)}
            <TellMe><BulbIcon />何をしますか</TellMe>
            <Spacer />
            <IconButton $w={46} $h={31} $color="#fff" aria-label="コメント"><CommentIcon /></IconButton>
          </TabRow>
        </Header>

        <RibbonBar />

        <FormulaRow>
          <FieldBox $w={117}>
            <Field $pad={5} aria-label="名前ボックス" defaultValue="CONCAT" />
            <IconButton $w={16} $color="#666" aria-label="名前の一覧"><Triangle size={7} /></IconButton>
          </FieldBox>
          <DotsHandle><DotsIcon /></DotsHandle>
          <FxBox $w={109}>
            <IconButton $color="#666" aria-label="キャンセル"><CancelIcon /></IconButton>
            <IconButton $color="#666" aria-label="入力"><AcceptIcon /></IconButton>
            <IconButton $color="#555" aria-label="関数の挿入">
              <Glyph $serif $italic $weight={700} $size={17}>f</Glyph>
              <Glyph $serif $italic $weight={700} $size={13}>x</Glyph>
            </IconButton>
          </FxBox>
          <FieldBox>
            <Field $pad={11} aria-label="数式バー" defaultValue={'=IF(C2=0,"午前","午後")'} />
            <IconButton $w={16} $color="#666" aria-label="数式バーの展開"><Svg w={9} h={6} sw={2}><path d="M1 1l3.500 3L8 1" /></Svg></IconButton>
          </FieldBox>
        </FormulaRow>

        <SheetArea>
          <GridClip>
            <Grid>
              <colgroup>
                <Col $w={52} />
                {COLUMNS.map(([name, w]) => <Col key={name} $w={w} />)}
              </colgroup>
              <thead>
                <Line $h={43}>
                  <Corner>
                    <SelectAll aria-label="すべて選択">
                      <svg width="36" height="36" viewBox="0 0 36 36" aria-hidden="true"><path d="M36 0v36H0z" fill="#b4b4b4" /></svg>
                    </SelectAll>
                  </Corner>
                  {COLUMNS.map(([name]) => <HeadCell key={name} scope="col" $on={name === "D"}>{name}</HeadCell>)}
                </Line>
              </thead>
              <tbody>
                {ROWS.map((row, i) => (
                  <Line key={i} $h={row.h}>
                    <HeadCell scope="row" $row $on={i === 1}>{i + 1}</HeadCell>
                    {COLUMNS.map(([name]) => <SheetCell key={name} col={name} row={i} value={row[name]} />)}
                  </Line>
                ))}
              </tbody>
            </Grid>
          </GridClip>
          <VScroll>
            <ScrollButton aria-label="上へスクロール"><Triangle dir="up" size={8} /></ScrollButton>
            <Track $vertical><Thumb $vertical /></Track>
            <ScrollButton aria-label="下へスクロール"><Triangle size={8} /></ScrollButton>
          </VScroll>
        </SheetArea>

        <SheetBar>
          <SheetNav>
            <IconButton $w={22} $color="#b8b8b8" aria-label="前のシート"><Triangle dir="left" /></IconButton>
            <IconButton $w={22} $color="#b8b8b8" aria-label="次のシート"><Triangle dir="right" /></IconButton>
          </SheetNav>
          <TabRule />
          <SheetTab $w={69}>Sheet1</SheetTab>
          <TabRule />
          <SheetTab $w={97}>Sheet1 (2)</SheetTab>
          <SheetTab $w={47} $active>活用</SheetTab>
          <SheetTab $w={72}>活用 (2)</SheetTab>
          <TabRule />
          <IconButton $w={68} $h={24} $color="#777" aria-label="新しいシート"><AddIcon /></IconButton>
          <Spacer />
          <DotsHandle><DotsIcon /></DotsHandle>
          <HScroll>
            <ScrollButton aria-label="左へスクロール"><Triangle dir="left" size={8} /></ScrollButton>
            <Track><Thumb /></Track>
            <ScrollButton aria-label="右へスクロール"><Triangle dir="right" size={8} /></ScrollButton>
          </HScroll>
        </SheetBar>

        <StatusBar>
          <StatusText>編集</StatusText>
          <IconButton $w={14} $color="#555" aria-label="マクロの記録"><MacroIcon /></IconButton>
          <StatusButton $margin="0 0 0 13px" $bold><AccessIcon />アクセシビリティ: 検討が必要です</StatusButton>
          <Spacer />
          <StatusButton $margin="0 19px 0 0"><DisplayIcon />表示設定</StatusButton>
          <IconButton $w={40} $color="#777" aria-label="標準"><ViewIcon kind="normal" /></IconButton>
          <IconButton $w={40} $color="#777" aria-label="ページ レイアウト表示"><ViewIcon kind="layout" /></IconButton>
          <IconButton $w={40} $color="#777" aria-label="改ページ プレビュー"><ViewIcon kind="break" /></IconButton>
          <IconButton $w={18} aria-label="縮小"><Svg w={8} h={8}><path d="M0 4.500h8" /></Svg></IconButton>
          <ZoomRange type="range" aria-label="ズーム" min="10" max="340" defaultValue="175" />
          <IconButton $w={18} aria-label="拡大"><Svg w={8} h={8}><path d="M0 4.500h8M4.500 0v8" /></Svg></IconButton>
          <ZoomValue>175%</ZoomValue>
        </StatusBar>
      </Window>
    </Page>
  );
}
